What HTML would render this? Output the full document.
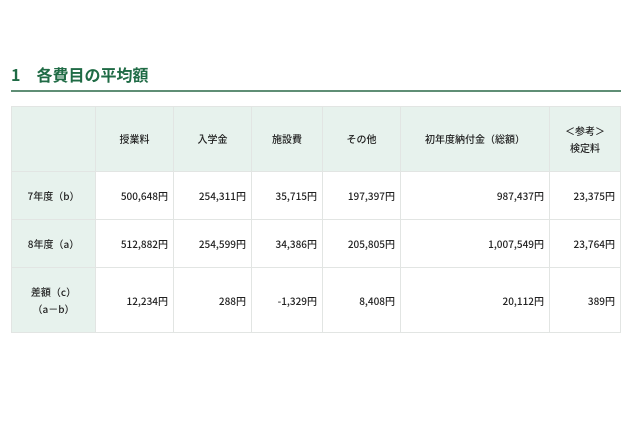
<!DOCTYPE html>
<html lang="ja">
<head>
<meta charset="utf-8">
<style>
html,body{margin:0;padding:0;background:#fff;}
body{width:640px;height:426px;overflow:hidden;position:relative;font-family:"Liberation Sans","Noto Sans CJK JP",sans-serif;}
#w{position:absolute;left:0;top:0;width:640px;height:426px;filter:blur(.25px);}
h1{position:absolute;left:11px;top:62px;margin:0;font:700 16px/24px "Noto Sans CJK JP",sans-serif;color:#1f6b45;white-space:pre;}
.rule{position:absolute;left:11px;top:90px;width:610px;height:2px;background:#5f8e75;}
table{position:absolute;left:11px;top:106px;border-collapse:collapse;table-layout:fixed;width:610px;font:500 10px/17px "Noto Sans CJK JP",sans-serif;color:#222;}
td,th{border:1px solid #e2e5e3;padding:0 5px;font-weight:500;text-align:right;}
th{background:#e7f2ed;text-align:center;}
tr:first-child th{padding-bottom:1px;}
</style>
</head>
<body>
<div id="w">
<h1>1　各費目の平均額</h1>
<div class="rule"></div>
<table>
<colgroup><col style="width:84px"><col style="width:78px"><col style="width:78px"><col style="width:71px"><col style="width:78px"><col style="width:149px"><col style="width:71px"></colgroup>
<tr style="height:65px"><th></th><th>授業料</th><th>入学金</th><th>施設費</th><th>その他</th><th>初年度納付金（総額）</th><th>＜参考＞<br>検定料</th></tr>
<tr style="height:48px"><th>7年度（b）</th><td>500,648円</td><td>254,311円</td><td>35,715円</td><td>197,397円</td><td>987,437円</td><td>23,375円</td></tr>
<tr style="height:48px"><th>8年度（a）</th><td>512,882円</td><td>254,599円</td><td>34,386円</td><td>205,805円</td><td>1,007,549円</td><td>23,764円</td></tr>
<tr style="height:65px"><th>差額（c）<br>（a－b）</th><td>12,234円</td><td>288円</td><td>-1,329円</td><td>8,408円</td><td>20,112円</td><td>389円</td></tr>
</table>
</div>
</body>
</html>
